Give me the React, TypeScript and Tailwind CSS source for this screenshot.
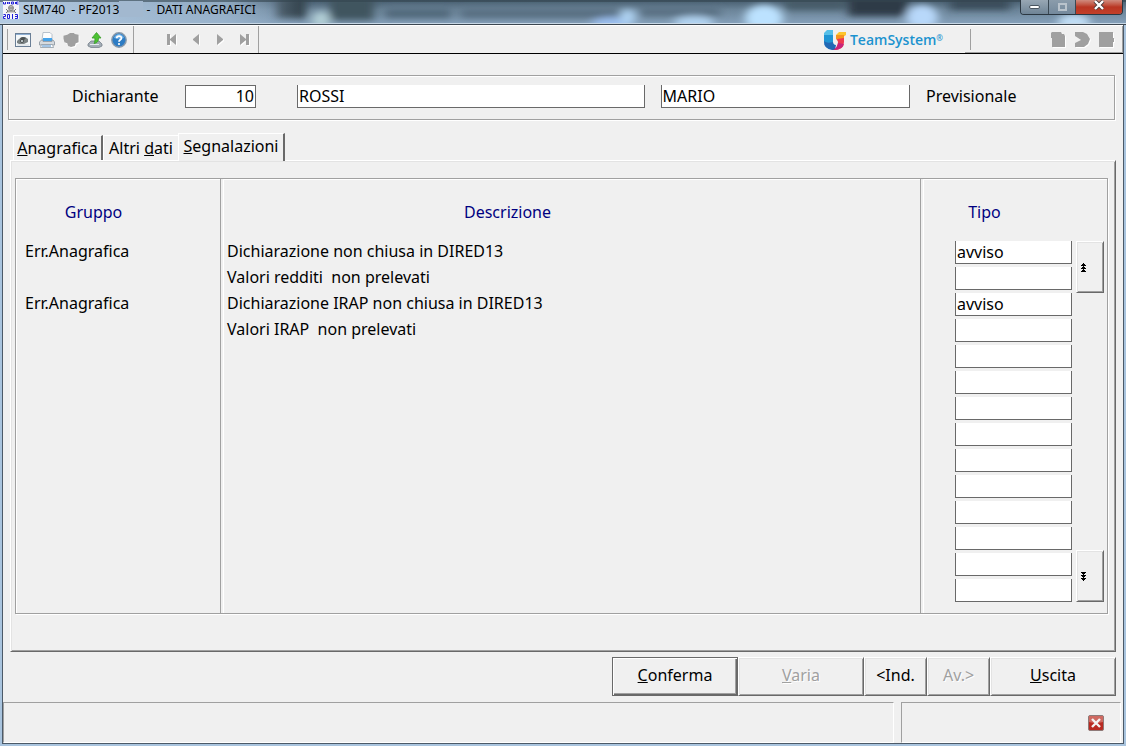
import { useState } from "react";
import type { ReactNode } from "react";

type Segnalazione = { gruppo: string; descrizione: string; tipo: string };

// Sample data, one entry for each visible row
const segnalazioni: Segnalazione[] = [
  { gruppo: "Err.Anagrafica", descrizione: "Dichiarazione non chiusa in DIRED13", tipo: "avviso" },
  { gruppo: "", descrizione: "Valori redditi  non prelevati", tipo: "" },
  { gruppo: "Err.Anagrafica", descrizione: "Dichiarazione IRAP non chiusa in DIRED13", tipo: "avviso" },
  { gruppo: "", descrizione: "Valori IRAP  non prelevati", tipo: "" },
];

const VISIBLE_ROWS = 14;

const field =
  "h-[23px] border-x border-b border-[#696969] bg-white px-px pb-px leading-5 text-black outline-none rounded-none";
const groove = "border border-[#a0a0a0] shadow-[1px_1px_0_#fff,inset_1px_1px_0_#fff]";
const raised =
  "border border-t-white border-l-white border-r-[#696969] border-b-[#696969] shadow-[inset_1px_1px_0_#e3e3e3,inset_-1px_-1px_0_#a0a0a0]";
const divider = "border-l border-[#a0a0a0] shadow-[inset_2px_0_0_#f0f0f0,inset_3px_0_0_#fff]";

// Blurred desktop seen through the glass title bar
function GlassBackground() {
  return (
    <svg className="absolute inset-0 h-full w-full" viewBox="0 0 1126 24" preserveAspectRatio="none" aria-hidden="true">
      <defs>
        <linearGradient id="glass" x1="0" y1="0" x2="0" y2="1">
          <stop offset="0" stopColor="#465c6d" />
          <stop offset="0.4" stopColor="#6b8498" />
          <stop offset="1" stopColor="#86a1bb" />
        </linearGradient>
        <linearGradient id="haze" x1="0" y1="0" x2="1" y2="0">
          <stop offset="0" stopColor="#b4cbe2" />
          <stop offset="0.75" stopColor="#9cb6cf" stopOpacity="0.85" />
          <stop offset="1" stopColor="#9cb6cf" stopOpacity="0" />
        </linearGradient>
        <filter id="soft" x="-5%" y="-50%" width="110%" height="200%">
          <feGaussianBlur stdDeviation="5 3" />
        </filter>
      </defs>
      <rect width="1126" height="24" fill="url(#glass)" />
      <g filter="url(#soft)">
        <rect x="276" y="-4" width="30" height="22" fill="#34454f" />
        <rect x="330" y="-4" width="44" height="24" fill="#40545f" />
        <rect x="385" y="9" width="66" height="9" fill="#4f6678" />
        <rect x="460" y="9" width="160" height="9" fill="#566d80" />
        <rect x="640" y="8" width="80" height="8" fill="#566d80" />
        <ellipse cx="321" cy="20" rx="9" ry="9" fill="#b2cfd6" />
        <ellipse cx="612" cy="24" rx="20" ry="7" fill="#9cc0f0" />
        <ellipse cx="628" cy="17" rx="8" ry="8" fill="#aed2f2" />
        <ellipse cx="694" cy="23" rx="20" ry="7" fill="#b2d4f2" />
        <ellipse cx="764" cy="18" rx="19" ry="13" fill="#bce2ff" />
        <rect x="785" y="-4" width="60" height="14" fill="#475b69" />
        <rect x="848" y="-4" width="60" height="20" fill="#2d3b46" />
        <ellipse cx="922" cy="17" rx="16" ry="12" fill="#b8d8fa" />
        <rect x="950" y="-4" width="60" height="14" fill="#3b4e5c" />
        <ellipse cx="1074" cy="22" rx="16" ry="8" fill="#c0ddf4" />
      </g>
      <rect width="300" height="24" fill="url(#haze)" />
      <rect width="1126" height="2" fill="#33444f" opacity="0.6" />
      <rect y="23" width="1126" height="1" fill="#c8d8e6" />
    </svg>
  );
}

function AppIcon() {
  return (
    <svg className="h-[18px] w-4" viewBox="0 0 16 18" aria-hidden="true">
      <rect width="16" height="18" fill="#f4f4f8" />
      <path d="M0.5 1v2h2V1M4.5 3V1l2 2V1M8.5 3V1h2v2zM12.5 3V1M15.5 1h-2v2h2" stroke="#2020d8" fill="none" />
      <circle cx="8" cy="7" r="2.5" fill="#c0c0c0" stroke="#888" />
      <path d="M3 12l2-2h6l2 2M3 8l2 2M13 8l-2 2M6 7h4" fill="#cfcfcf" stroke="#777" />
      <path d="M0.5 13.5h2v2h-2v2h2M4.5 13.5h2v4h-2zM9.5 13v5M12 13.5h2.5v4H12M12 15.5h2" stroke="#2020d8" fill="none" />
    </svg>
  );
}

function CameraIcon() {
  return (
    <svg viewBox="0 0 16 16" className="h-4 w-4" aria-hidden="true">
      <rect x="0.5" y="1.5" width="15" height="13" fill="#f4f8fa" stroke="#6a7f96" />
      <path d="M1 2.5h14" stroke="#8fb0d4" />
      <path d="M2 9l2-2 3-2h3l3 2v3l-4 2H4l-2-1z" fill="#7b8384" />
      <path d="M5 6l3-1 3 1-2 2H6z" fill="#4c5253" />
      <circle cx="7" cy="9" r="1.6" fill="#c3cdd0" stroke="#3c4142" strokeWidth="0.8" />
      <path d="M2 13h12" stroke="#d4dade" />
    </svg>
  );
}

function PrinterIcon() {
  return (
    <svg viewBox="0 0 16 16" className="h-4 w-4" aria-hidden="true">
      <path d="M4 0.5h7l2 2V8H3z" fill="#fdfdfd" stroke="#a8b4c0" strokeWidth="0.8" />
      <path d="M4 6h9v3H4z" fill="#46a4ea" />
      <path d="M0.5 10l2-2h1.5v1.5h9V8h1l1.5 2v3h-15z" fill="#d7dbdf" stroke="#87929c" strokeWidth="0.8" />
      <path d="M2.5 12.5h11l1 3h-13z" fill="#fff" stroke="#8d99a5" strokeWidth="0.8" />
      <path d="M3 14h9" stroke="#4d8dcc" />
    </svg>
  );
}

function BlobIcon() {
  return (
    <svg viewBox="0 0 17 17" className="h-4 w-[17px]" aria-hidden="true">
      <path d="M1 5l4-1 3-2h4l1 1 4 1v8l-3 1-1 3-4 1-3-1-1-3-3-1-1-4z" fill="#fff" />
      <path d="M0 4l4-1 3-2h4l1 1 4 1v8l-3 1-1 3-4 1-3-1-1-3-3-1-1-4z" fill="#a0a0a0" />
    </svg>
  );
}

function ExportIcon() {
  return (
    <svg viewBox="0 0 16 16" className="h-4 w-4" aria-hidden="true">
      <path d="M1 12l3-3h8l3 3v2l-3 1.5H4L1 14z" fill="#a3adb6" stroke="#77828b" strokeWidth="0.8" />
      <path d="M3 12.5h9" stroke="#e5eaee" />
      <path d="M9.5 0.5L14 6h-2.5c0 3-1 5-4.500 5.500C8 10 8 8 7.800 6H5z" fill="#4cc232" stroke="#3a9c2a" strokeWidth="0.8" />
    </svg>
  );
}

function HelpIcon() {
  return (
    <svg viewBox="0 0 16 16" className="h-4 w-4" aria-hidden="true">
      <circle cx="8" cy="8" r="7.2" fill="#2d7cc4" stroke="#8a9aaa" strokeWidth="1.4" />
      <path d="M3 6c1-3 3-4 5-4s4 1 5 4c-3 1-7 1-10 0z" fill="#6db1e8" />
      <path d="M5.7 6.2C5.7 3.4 10.6 3.4 10.4 6.2 10.3 7.8 8 7.8 8 9.7" fill="none" stroke="#fff" strokeWidth="1.8" />
      <circle cx="8" cy="12" r="1.1" fill="#fff" />
    </svg>
  );
}

// Grey shape with the white offset edge of a disabled control
function DisabledGlyph({ d }: { d: string }) {
  return (
    <svg viewBox="0 0 17 17" className="h-[17px] w-[17px]" aria-hidden="true">
      <path d={d} fill="#fff" transform="translate(1 1)" />
      <path d={d} fill="#a0a0a0" />
    </svg>
  );
}

function ToolButton({ label, disabled, children }: { label: string; disabled?: boolean; children: ReactNode }) {
  return (
    <button type="button" aria-label={label} disabled={disabled} className="flex w-6 items-center justify-center">
      {children}
    </button>
  );
}

function TeamSystemLogo() {
  return (
    <div className="flex items-center gap-1">
      <svg viewBox="0 0 22 20" className="h-5 w-[22px]" aria-hidden="true">
        <path d="M0 3l3-3h6v6H0z" fill="#55bfe8" />
        <path d="M0 5h9v7q0 3 2 3v4H8q-8 0-8-8z" fill="#1f95d4" />
        <path d="M0 11q3 3 9 1 0 3 3 3l-1 5H8q-8-1-8-9z" fill="#2268b4" />
        <path d="M12 5l3-3h7v3l-3 2h-7z" fill="#fdc52d" />
        <path d="M12 5h8v6h-6l-2-2z" fill="#f7941e" />
        <path d="M13 9l7-1v4q0 8-10 8 4-3 4-8z" fill="#ee3a50" />
        <path d="M14 13l6 1q-2 6-11 6 4-2 5-7z" fill="#c8247a" />
      </svg>
      <span className="font-['Open_Sans',sans-serif] text-[14px] font-semibold leading-5 text-[#1c93cf]">
        TeamSystem<sup className="text-[8px]">®</sup>
      </span>
    </div>
  );
}

function ScrollGlyph({ down }: { down?: boolean }) {
  return (
    <svg viewBox="0 0 5 9" className={down ? "h-[9px] w-[5px] rotate-180" : "h-[9px] w-[5px]"} shapeRendering="crispEdges" aria-hidden="true">
      <path d="M2 0h1v1h1v1h1v1H0V2h1V1h1zM2 3h1v1h1v1h1v1H0V5h1V4h1zM2 6h1v1h1v1h1v1H0V8h1V7h1z" fill="#000" />
    </svg>
  );
}

function TitleBar() {
  return (
    <header className="relative flex h-[25px] items-start justify-between border-b border-[#3b4650]">
      <GlassBackground />
      <div className="relative flex items-center gap-1 pl-[3px] pt-px">
        <AppIcon />
        <h1 className="flex whitespace-pre font-['Noto_Sans',sans-serif] text-xs leading-[18px] text-black">
          SIM740  - PF2013
          <span className="h-4 w-6 bg-[#a2b8cf]" />
          {" -  DATI ANAGRAFICI"}
        </h1>
      </div>
      <div className="relative mr-[3px] flex h-[15px] overflow-hidden rounded-b border border-t-0 border-[#2b3742]">
        <button type="button" aria-label="Riduci" className="flex w-7 items-center justify-center border-r border-[#3a4854] bg-gradient-to-b from-[#98a7b4] to-[#6f8496]">
          <span className="h-1 w-[11px] rounded-sm border border-[#4a5560] bg-white" />
        </button>
        <button type="button" aria-label="Ingrandisci" className="flex w-[27px] items-center justify-center border-r border-[#3a4854] bg-gradient-to-b from-[#8b9cab] to-[#74899c]">
          <span className="h-2 w-[9px] border-2 border-[#b9c3cc]" />
        </button>
        <button type="button" aria-label="Chiudi" className="flex w-[46px] items-start justify-center bg-gradient-to-b from-[#cf8b7e] via-[#b93522] to-[#c2402a]">
          <svg viewBox="0 0 12 10" className="h-[10px] w-3" aria-hidden="true">
            <path d="M2 1l8 8M10 1l-8 8" stroke="#4a3a3a" strokeWidth="4" />
            <path d="M2 1l8 8M10 1l-8 8" stroke="#fff" strokeWidth="2.4" />
          </svg>
        </button>
      </div>
    </header>
  );
}

function Toolbar() {
  return (
    <div className="flex h-[29px] items-stretch border-b border-b-black border-t border-t-white">
      <div className="flex items-center border-r border-[#a0a0a0] pl-[2px]">
        <span className="mr-[3px] h-[21px] w-[3px] border-r border-[#a0a0a0]" />
        <ToolButton label="Anteprima"><CameraIcon /></ToolButton>
        <ToolButton label="Stampa"><PrinterIcon /></ToolButton>
        <ToolButton label="Note" disabled><BlobIcon /></ToolButton>
        <ToolButton label="Esporta"><ExportIcon /></ToolButton>
        <ToolButton label="Guida"><HelpIcon /></ToolButton>
        <span className="ml-[2px] h-full border-r border-[#a0a0a0]" />
        <div className="flex pl-[26px] pr-[2px]">
          <ToolButton label="Primo" disabled><DisabledGlyph d="M3 3h3v11H3zM12 3v11L6 9V8z" /></ToolButton>
          <ToolButton label="Precedente" disabled><DisabledGlyph d="M11 3v11L5 9V8z" /></ToolButton>
          <ToolButton label="Successivo" disabled><DisabledGlyph d="M5 3v11l6-5V8z" /></ToolButton>
          <ToolButton label="Ultimo" disabled><DisabledGlyph d="M4 3v11l6-5V8zM10 3h3v11h-3z" /></ToolButton>
        </div>
      </div>
      <div className="flex flex-1 items-center justify-end pr-[22px]">
        <TeamSystemLogo />
      </div>
      <div className="flex w-[158px] items-center justify-between border-b border-r border-[#a0a0a0] pr-1">
        <span className="ml-1 h-[21px] w-[2px] border-r border-[#a0a0a0]" />
        <div className="flex">
          <ToolButton label="Documento" disabled><DisabledGlyph d="M2 1h9l1 2h2l1 2v11H2V7H1V2z" /></ToolButton>
          <ToolButton label="Invia" disabled><DisabledGlyph d="M1 1h8l4 2 3 5-2 5-4 3H1v-4l6-3-6-4z" /></ToolButton>
          <ToolButton label="Archivio" disabled><DisabledGlyph d="M1 1h14v6h1v4h-1v5H1z" /></ToolButton>
        </div>
      </div>
    </div>
  );
}

function DichiaranteBox() {
  return (
    <section className={`ml-[5px] mr-2 flex h-[45px] items-center pb-[2px] ${groove}`}>
      <label htmlFor="codice" className="w-[176px] pb-[2px] pl-[63px]">Dichiarante</label>
      <input id="codice" defaultValue="10" className={`w-[71px] border-t text-right ${field}`} />
      <input aria-label="Cognome" defaultValue="ROSSI" className={`ml-[41px] min-w-0 flex-[7] ${field}`} />
      <input aria-label="Nome" defaultValue="MARIO" className={`ml-4 min-w-0 flex-[5] ${field}`} />
      <span className="w-[204px] pb-[2px] pl-4">Previsionale</span>
    </section>
  );
}

const tabs = [
  { id: "anagrafica", label: <><u>A</u>nagrafica</>, width: "w-[90px]" },
  { id: "altri", label: <>Altri <u>d</u>ati</>, width: "w-[75px]" },
  { id: "segnalazioni", label: <><u>S</u>egnalazioni</>, width: "w-[107px]" },
];

export default function App() {
  const [activeTab, setActiveTab] = useState("segnalazioni");

  // Pad the list with empty rows up to the height of the grid
  const rows = Array.from(
    { length: VISIBLE_ROWS },
    (_, i) => segnalazioni[i] ?? { gruppo: "", descrizione: "", tipo: "" }
  );

  return (
    <div className="flex min-h-screen flex-col bg-[#a9c4de] font-['Noto_Sans',sans-serif] text-base leading-5 text-black">
      <TitleBar />
      <main className="mx-[2px] mb-[2px] flex flex-1 flex-col border border-t-0 border-[#4c5a68] bg-[#f0f0f0]">
        <Toolbar />
        <div className="pt-[21px]">
          <DichiaranteBox />
        </div>

        {/* Tabs */}
        <div role="tablist" className="mt-[13px] flex items-end pl-[10px]">
          {tabs.map((tab) => {
            const active = tab.id === activeTab;
            return (
              <button
                key={tab.id}
                type="button"
                role="tab"
                aria-selected={active}
                onClick={() => setActiveTab(tab.id)}
                className={`${tab.width} flex justify-center whitespace-nowrap border-l border-t border-white ${
                  active
                    ? "relative -mb-px h-7 border-r-2 border-r-[#696969] bg-[#f0f0f0] pt-[2px]"
                    : tab.id === "anagrafica"
                      ? "h-[25px] border-r-2 border-r-[#696969] pt-[2px]"
                      : "h-[25px] pt-[2px]"
                }`}
              >
                <span>{tab.label}</span>
              </button>
            );
          })}
        </div>

        {/* Tab panel */}
        <section role="tabpanel" className={`ml-[7px] mr-[7px] px-1 pb-[37px] pt-[17px] ${raised}`}>
          <div className={`mr-[3px] flex ${groove}`}>
            <table className="flex-1 table-fixed border-separate border-spacing-0">
              <thead>
                <tr className="h-[62px] text-[#000080]">
                  <th className="w-[204px] p-0 pr-[49px] pt-1 font-normal">Gruppo</th>
                  <th className={`p-0 pr-[126px] pt-1 font-normal ${divider}`}>Descrizione</th>
                  <th className={`w-[156px] p-0 pr-[28px] pt-1 font-normal ${divider}`}>Tipo</th>
                </tr>
              </thead>
              <tbody>
                {rows.map((row, i) => (
                  <tr key={i} className="h-[26px]">
                    <td className="p-0 pl-[9px] align-top">{row.gruppo}</td>
                    <td className={`whitespace-pre p-0 pl-[6px] align-top ${divider}`}>{row.descrizione}</td>
                    <td className={`p-0 pl-[34px] align-top ${divider}`}>
                      <input aria-label={`Tipo riga ${i + 1}`} defaultValue={row.tipo} className={`block w-[117px] ${field}`} />
                    </td>
                  </tr>
                ))}
              </tbody>
              <tfoot aria-hidden="true">
                <tr className="h-2">
                  <td className="p-0" />
                  <td className={`p-0 ${divider}`} />
                  <td className={`p-0 ${divider}`} />
                </tr>
              </tfoot>
            </table>
            <div className="flex w-[31px] flex-col justify-between pb-[11px] pt-[62px]">
              <button type="button" aria-label="Pagina precedente" className={`flex h-[52px] w-7 items-center pl-1 ${raised}`}>
                <ScrollGlyph />
              </button>
              <button type="button" aria-label="Pagina successiva" className={`flex h-[52px] w-7 items-center pl-1 ${raised}`}>
                <ScrollGlyph down />
              </button>
            </div>
          </div>
        </section>

        {/* Actions */}
        <div className="mr-[7px] mt-[5px] flex justify-end">
          <button type="button" className="h-[39px] w-[126px] border border-[#696969] pb-[3px] shadow-[inset_1px_1px_0_#fff,inset_-1px_-1px_0_#696969,inset_-2px_-2px_0_#a0a0a0]">
            <u>C</u>onferma
          </button>
          <button type="button" disabled className={`h-[39px] w-[126px] pb-[3px] text-[#a0a0a0] [text-shadow:1px_1px_0_#fff] ${raised}`}>
            <u>V</u>aria
          </button>
          <button type="button" className={`h-[39px] w-[63px] pb-[3px] ${raised}`}>&lt;Ind.</button>
          <button type="button" disabled className={`h-[39px] w-[63px] pb-[3px] text-[#a0a0a0] [text-shadow:1px_1px_0_#fff] ${raised}`}>
            Av.&gt;
          </button>
          <button type="button" className={`h-[39px] w-[126px] pb-[3px] ${raised}`}>
            <u>U</u>scita
          </button>
        </div>

        {/* Status bar */}
        <footer className="mt-[6px] flex min-h-10 flex-1 gap-[7px] pr-[2px]">
          <div className="flex-1 border border-b-white border-l-[#a0a0a0] border-r-white border-t-[#a0a0a0]" />
          <div className="flex w-[220px] items-center justify-end border border-b-white border-l-[#a0a0a0] border-r-white border-t-[#a0a0a0] pr-4">
            <button type="button" aria-label="Annulla">
              <svg viewBox="0 0 16 16" className="h-4 w-4" aria-hidden="true">
                <rect x="0.5" y="0.5" width="15" height="15" rx="1.5" fill="#b92a22" stroke="#8e7a78" />
                <path d="M1 1h14v6q-7 2-14 0z" fill="#cf6a62" />
                <path d="M4 4l8 8M12 4l-8 8" stroke="#f4f4f4" strokeWidth="2.4" />
              </svg>
            </button>
          </div>
        </footer>
      </main>
    </div>
  );
}
